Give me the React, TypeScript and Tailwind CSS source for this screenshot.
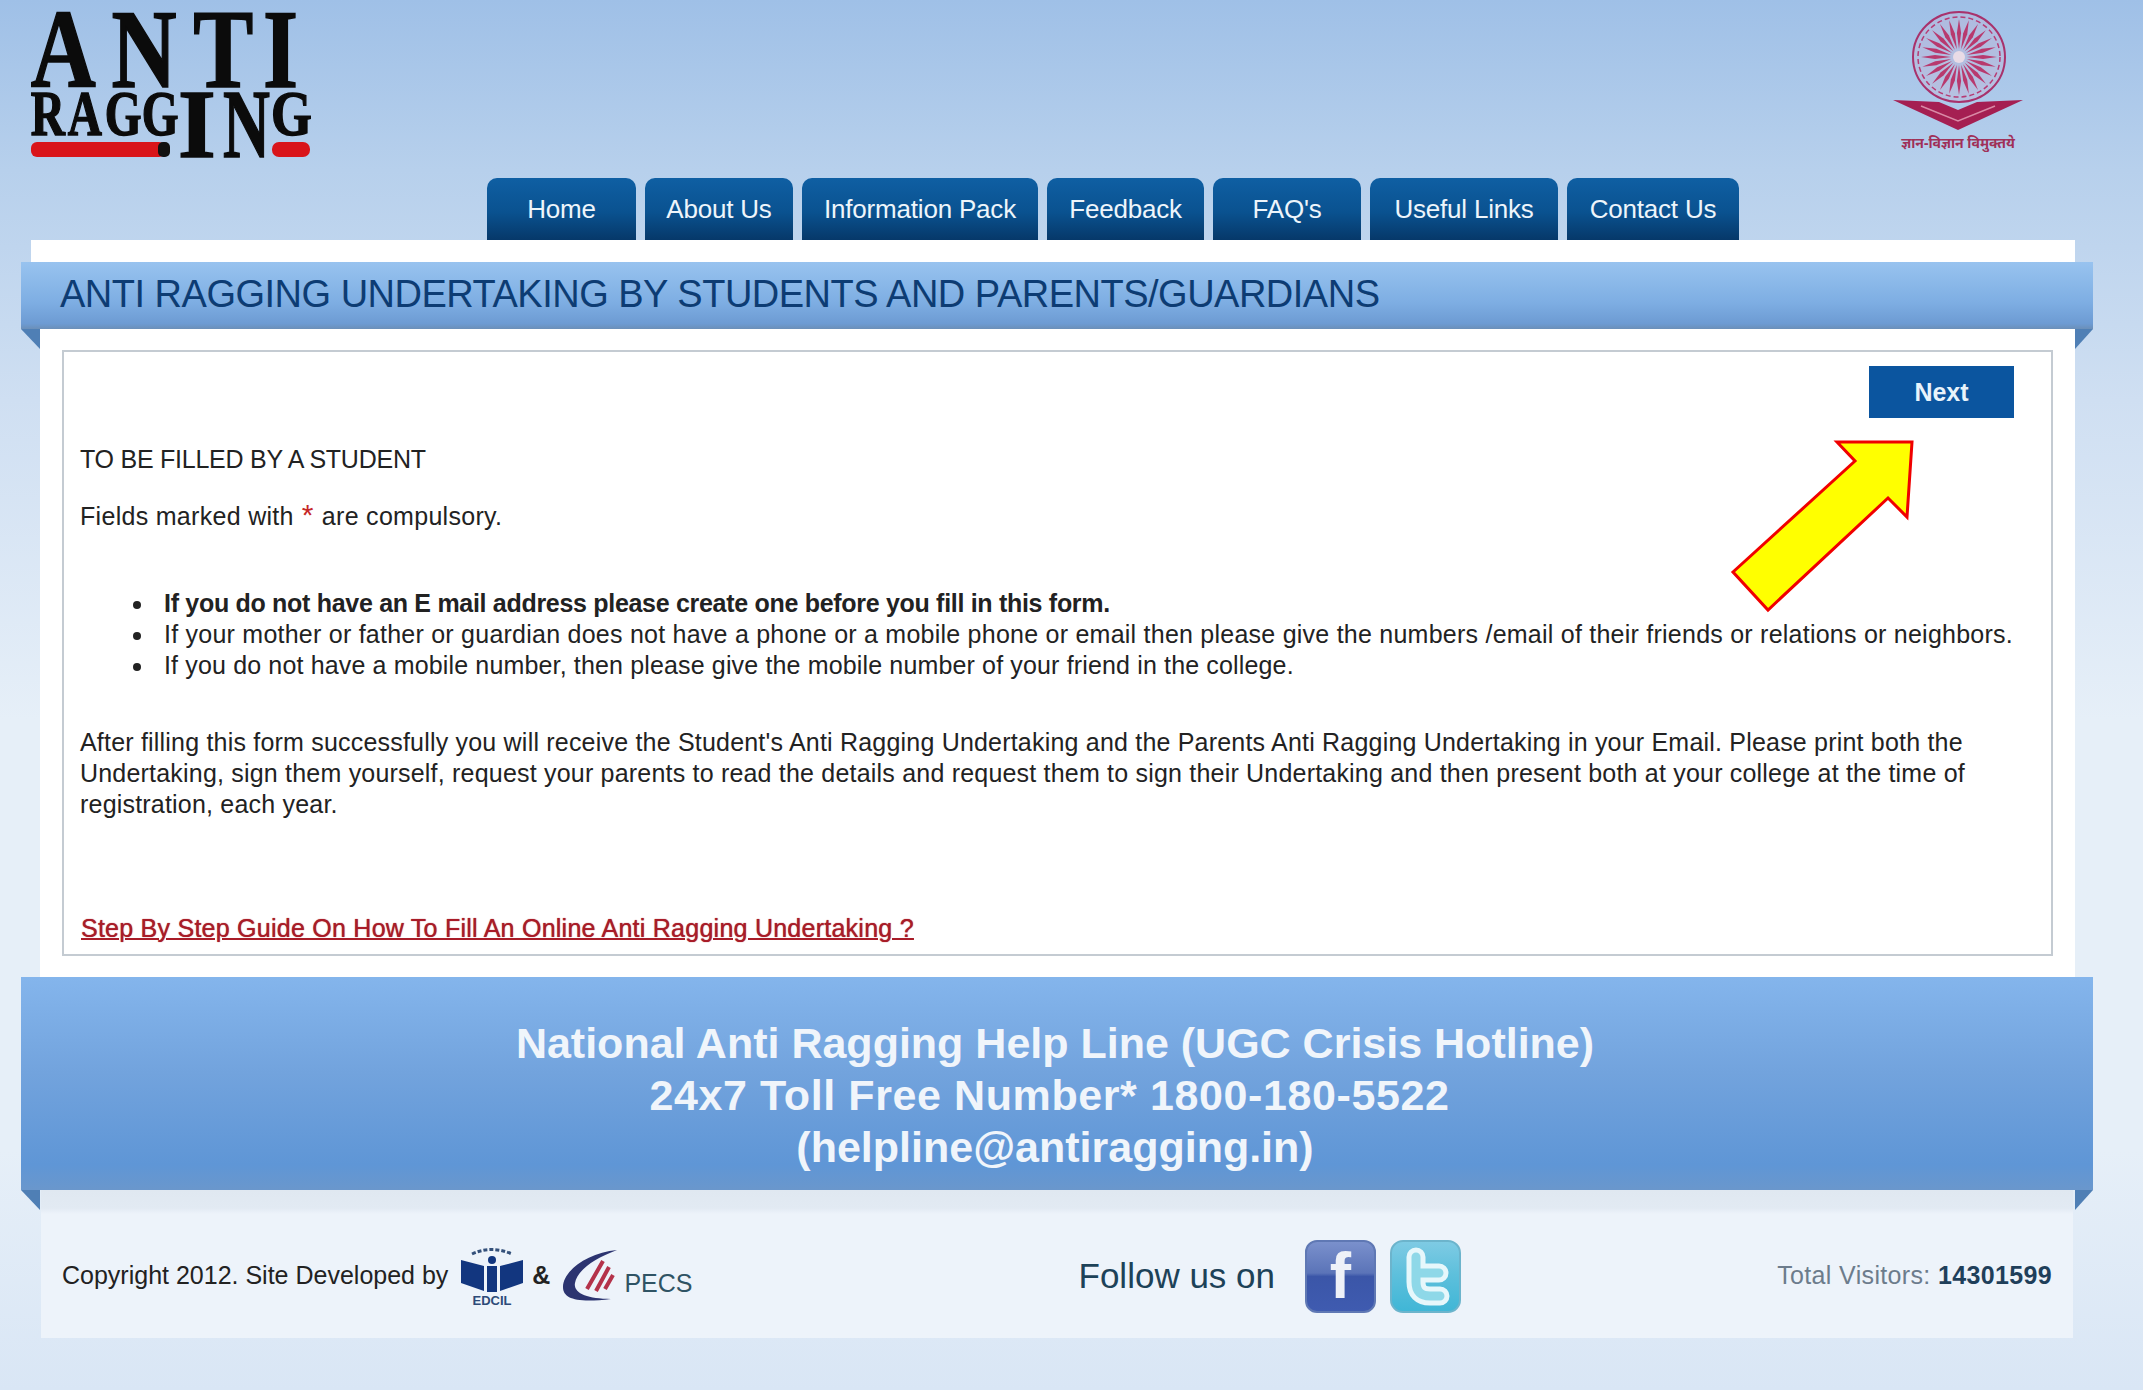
const navItems = [
  { label: "Home", width: "w-[149px]" },
  { label: "About Us", width: "w-[148px]" },
  { label: "Information Pack", width: "w-[236px]" },
  { label: "Feedback", width: "w-[157px]" },
  { label: "FAQ's", width: "w-[148px]" },
  { label: "Useful Links", width: "w-[188px]" },
  { label: "Contact Us", width: "w-[172px]" },
];

const spokes = Array.from({ length: 24 }, (_, i) => (i * 360) / 24);

function AntiLogo() {
  return (
    <svg width="290" height="150" viewBox="0 0 290 150" className="block overflow-visible">
      <g fontFamily="'Liberation Serif', serif" fontWeight="700" fill="#0b0b0b" stroke="#0b0b0b" strokeWidth="1.5">
        <text transform="scale(0.85 1.05)" x="1 96 192 274" y="71" fontSize="106">ANTI</text>
        <text transform="scale(0.74 1)" x="1 51 101 151" y="123" fontSize="64">RAGG</text>
        <text x="148" y="145" fontSize="97">I</text>
        <text transform="scale(0.67 1)" x="288" y="145" fontSize="97">N</text>
        <text transform="scale(0.82 1)" x="294" y="123" fontSize="64">G</text>
      </g>
      <rect x="1" y="130" width="134" height="15" rx="6" fill="#d9141a" />
      <rect x="128" y="130" width="12" height="15" rx="5" fill="#111" />
      <rect x="242" y="130" width="38" height="15" rx="7" fill="#d9141a" />
    </svg>
  );
}

function UgcLogo() {
  return (
    <svg width="130" height="150" viewBox="0 0 130 150" className="block">
      <g transform="translate(66 55)">
        <ellipse rx="46" ry="45" fill="#c9b3d0" fillOpacity="0.35" stroke="#a8326c" strokeWidth="2" />
        <ellipse rx="41" ry="40" fill="none" stroke="#b73a74" strokeWidth="1.5" strokeDasharray="5 3" />
        {spokes.map((a) => (
          <path key={a} d="M0 -8 L-2.1 -24 L0 -38 L2.1 -24 Z" fill="#b8396e" transform={`rotate(${a})`} />
        ))}
        <circle r="6" fill="#e9dbe6" />
      </g>
      <path d="M0 98 L46 100 L65 108 L84 100 L130 98 L65 128 Z" fill="#a51f52" />
      <path d="M28 104 L65 119 L102 104" fill="none" stroke="#d98aa6" strokeWidth="1.5" />
      <text x="65" y="146" textAnchor="middle" fontSize="14" fontWeight="700" fill="#a03058" fontFamily="'Noto Sans', 'Liberation Sans', sans-serif">
        ज्ञान-विज्ञान विमुक्तये
      </text>
    </svg>
  );
}

function EdcilLogo() {
  return (
    <svg width="64" height="62" viewBox="0 0 64 62" className="block">
      <path d="M12 9 Q31 0 52 9" fill="none" stroke="#34507a" strokeWidth="3" strokeDasharray="4 2" />
      <path d="M1 15 L24 21 L24 46 L1 38 Z" fill="#12367f" />
      <path d="M63 15 L40 21 L40 46 L63 38 Z" fill="#12367f" />
      <circle cx="32" cy="15" r="4" fill="#12367f" />
      <rect x="27" y="21" width="10" height="26" fill="#12367f" />
      <text x="32" y="60" textAnchor="middle" fontSize="13" fontWeight="700" fill="#2d4a78" fontFamily="'Liberation Sans', sans-serif">
        EDCIL
      </text>
    </svg>
  );
}

function PecsLogo() {
  return (
    <svg width="58" height="54" viewBox="0 0 58 54" className="block">
      <path d="M56 1 C26 4 2 22 2 38 C2 50 16 54 50 50 C26 50 12 44 14 34 C16 22 32 10 56 1 Z" fill="#2c3470" />
      <path d="M26 40 L42 12 M35 42 L48 18 M44 40 L52 26" stroke="#b4324a" strokeWidth="4" fill="none" />
    </svg>
  );
}

function FacebookIcon() {
  return (
    <div className="flex h-[73px] w-[71px] items-center justify-center rounded-[12px] border-2 border-[#5f78b4] bg-[linear-gradient(180deg,#7a90cc,#5b74b8_45%,#3b56a8_50%,#3f5bb0)] text-[64px] font-bold text-[#eef1f8]">
      f
    </div>
  );
}

function TwitterIcon() {
  return (
    <svg width="71" height="73" viewBox="0 0 71 73" className="block">
      <defs>
        <linearGradient id="tw" x1="0" y1="0" x2="0" y2="1">
          <stop offset="0" stopColor="#7fcbe4" />
          <stop offset="0.45" stopColor="#5fc0dc" />
          <stop offset="1" stopColor="#3fb6d6" />
        </linearGradient>
      </defs>
      <rect x="1" y="1" width="69" height="71" rx="12" fill="url(#tw)" stroke="#6cb4cc" strokeWidth="2" />
      <path d="M26 17 L26 42 Q26 56 40 56 L50 56 M26 33 L49 33" fill="none" stroke="#e6f7fb" strokeWidth="19" strokeLinecap="round" />
      <path d="M26 17 L26 42 Q26 56 40 56 L50 56 M26 33 L49 33" fill="none" stroke="#8ed8e8" strokeWidth="9" strokeLinecap="round" />
    </svg>
  );
}

function FoldLeft() {
  return <div className="absolute left-0 top-full h-0 w-0 border-t-[20px] border-l-[19px] border-t-[#4f7fb5] border-l-transparent" />;
}

function FoldRight() {
  return <div className="absolute right-0 top-full h-0 w-0 border-t-[20px] border-r-[18px] border-t-[#4f7fb5] border-r-transparent" />;
}

export default function App() {
  return (
    <div className="h-[1390px] w-[2143px] overflow-hidden bg-[linear-gradient(180deg,#9fc0e7_0px,#b7d0ec_170px,#cfdff2_400px,#e6eff8_720px,#e6eff8_1150px,#d9e6f5_1390px)] font-['Liberation_Sans',Arial,sans-serif] text-[#222]">
      <header className="flex h-[178px] items-start justify-between pl-[30px] pr-[120px]">
        <div className="pt-[12px]">
          <AntiLogo />
        </div>
        <div className="pt-[2px]">
          <UgcLogo />
        </div>
      </header>

      <nav className="flex h-[62px] gap-[9px] pl-[487px]">
        {navItems.map((item) => (
          <a
            key={item.label}
            className={`flex items-center justify-center rounded-t-[10px] bg-[linear-gradient(180deg,#0f5fa3,#0a5290_55%,#063869)] text-[26px] tracking-[-0.2px] text-[#eef5fb] ${item.width}`}
          >
            {item.label}
          </a>
        ))}
      </nav>

      <div className="ml-[31px] h-[22px] w-[2044px] bg-white" />

      <div className="relative ml-[21px] flex h-[67px] w-[2072px] items-center bg-[linear-gradient(180deg,#98c3ef,#7eaee3_60%,#6d9bd3_92%,#6b8fb8)] pb-[2px] pl-[39px]">
        <h1 className="text-[38px] font-normal tracking-[-0.5px] text-[#0d3c73]">
          ANTI RAGGING UNDERTAKING BY STUDENTS AND PARENTS/GUARDIANS
        </h1>
        <FoldLeft />
        <FoldRight />
      </div>

      <main className="ml-[40px] h-[648px] w-[2035px] bg-white pl-[22px] pt-[21px]">
        <section className="relative flex h-[606px] w-[1991px] flex-col border-2 border-[#c4cbd2] pl-[16px] text-[25px] leading-[31px] tracking-[0.2px]">
          <button className="absolute right-[37px] top-[14px] h-[52px] w-[145px] bg-[#0b559f] text-[25px] font-bold tracking-normal text-[#e8f3fb]">
            Next
          </button>

          <svg width="190" height="175" viewBox="0 0 190 175" className="absolute left-[1665px] top-[88px]">
            <path
              d="M108 2 L183 2 L178 77 L159 58 L39 170 L4 132 L126 21 Z"
              fill="#ffff00"
              stroke="#f00000"
              strokeWidth="3"
            />
          </svg>

          <p className="mt-[92px] tracking-[-0.25px]">TO BE FILLED BY A STUDENT</p>
          <p className="mt-[24px] flex items-baseline tracking-[0.3px]">
            Fields marked with <span className="mx-[8px] text-[30px] leading-[31px] text-[#c62828]">*</span> are compulsory.
          </p>

          <ul className="mt-[56px] list-none pl-[84px]">
            <li className="relative font-bold tracking-[-0.3px] before:absolute before:left-[-31px] before:top-[13px] before:size-[8px] before:rounded-full before:bg-[#222]">
              If you do not have an E mail address please create one before you fill in this form.
            </li>
            <li className="relative whitespace-nowrap tracking-[0.24px] before:absolute before:left-[-31px] before:top-[13px] before:size-[8px] before:rounded-full before:bg-[#222]">
              If your mother or father or guardian does not have a phone or a mobile phone or email then please give the numbers /email of their friends or relations or neighbors.
            </li>
            <li className="relative tracking-[0.15px] before:absolute before:left-[-31px] before:top-[13px] before:size-[8px] before:rounded-full before:bg-[#222]">
              If you do not have a mobile number, then please give the mobile number of your friend in the college.
            </li>
          </ul>

          <p className="mt-[46px] w-[1900px]">
            After filling this form successfully you will receive the Student's Anti Ragging Undertaking and the Parents Anti Ragging Undertaking in your Email. Please print both the Undertaking, sign them yourself, request your parents to read the details and request them to sign their Undertaking and then present both at your college at the time of registration, each year.
          </p>

          <a className="ml-[1px] mt-[93px] block text-[25px] tracking-[0.25px] text-[#a81c28] underline decoration-2 [text-shadow:0_0_1px_#a81c28]">
            Step By Step Guide On How To Fill An Online Anti Ragging Undertaking ?
          </a>
        </section>
      </main>

      <div className="relative ml-[21px] flex h-[213px] w-[2072px] flex-col items-center justify-center bg-[linear-gradient(180deg,#84b5ec,#72a3dd_45%,#5f96d6_88%,#6a97cc)] pr-[4px] pt-[22px] text-[43px] font-bold leading-[52px] text-[#f0f5fb]">
        <div>National Anti Ragging Help Line (UGC Crisis Hotline)</div>
        <div className="pr-[11px] tracking-[0.6px]">24x7 Toll Free Number* 1800-180-5522</div>
        <div>(helpline@antiragging.in)</div>
        <FoldLeft />
        <FoldRight />
      </div>

      <footer className="ml-[41px] flex h-[148px] w-[2032px] items-center bg-[linear-gradient(180deg,#e0e8f1_0px,#e2eaf3_18px,#edf3fa_24px,#edf3fa_100%)] pl-[21px] pr-[21px] pt-[24px] text-[25px]">
        <div className="flex items-center">
          <span>Copyright 2012. Site Developed by</span>
          <span className="ml-[12px]"><EdcilLogo /></span>
          <span className="ml-[8px] font-bold">&amp;</span>
          <span className="ml-[11px]"><PecsLogo /></span>
          <span className="ml-[5px] mt-[16px] text-[25px] text-[#2f5364]">PECS</span>
        </div>
        <div className="ml-[386px] flex items-center">
          <span className="text-[35px] text-[#1d4258]">Follow us on</span>
          <div className="ml-[30px]"><FacebookIcon /></div>
          <div className="ml-[14px]"><TwitterIcon /></div>
        </div>
        <div className="ml-auto text-[25px] tracking-[0.35px] text-[#6c7c8c]">
          Total Visitors: <span className="font-bold text-[#1f3f5a]">14301599</span>
        </div>
      </footer>
    </div>
  );
}
